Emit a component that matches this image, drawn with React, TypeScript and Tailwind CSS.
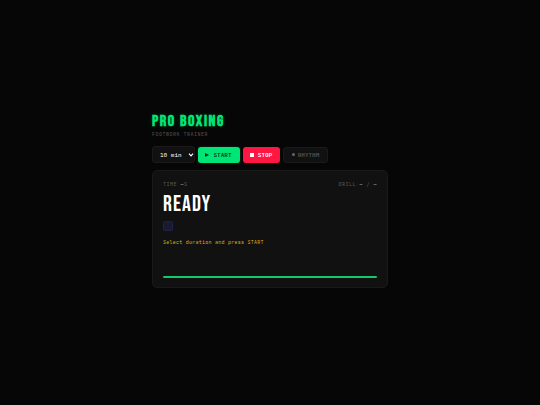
import { useState } from "react";

const durations = [5, 10, 15, 20];

const App = () => {
  const [minutes, setMinutes] = useState(10);

  return (
    <div className="flex min-h-screen items-center justify-center bg-[#060606] pb-[5px] font-['JetBrains_Mono','DejaVu_Sans_Mono',monospace] text-white">
      <main className="w-full max-w-[236px]">
        <header>
          <h1 className="font-['Bebas_Neue','Liberation_Sans',sans-serif] text-[16px] leading-[19px] font-bold tracking-widest text-[#00e676] [text-shadow:0_0_5px_rgba(0,230,118,0.2)]">
            PRO BOXING
          </h1>
          <p className="text-[5px] leading-[7px] tracking-widest text-[#555555]">
            FOOTWORK TRAINER
          </p>
        </header>

        <div className="mt-2 flex items-center gap-[3px] text-[6px] leading-[8px]">
          <div className="relative flex">
            <select
              aria-label="Duration"
              value={minutes}
              onChange={(e) => setMinutes(Number(e.target.value))}
              className="h-[17px] w-[43px] appearance-none rounded-[3px] border border-[#1a1a1a] bg-[#111111] pl-[7px] text-white"
            >
              {durations.map((d) => (
                <option key={d} value={d}>
                  {d} min
                </option>
              ))}
            </select>
            <svg
              viewBox="0 0 6 4"
              className="pointer-events-none absolute top-[7px] right-px h-1 w-1.5"
              fill="none"
              stroke="#ffffff"
              strokeWidth="1.2"
            >
              <path d="M1 0.7 L3 2.8 L5 0.7" />
            </svg>
          </div>
          <button className="flex h-4 w-[42px] items-center justify-center gap-1 rounded-[3px] bg-[#00e676] pr-px font-bold text-[#06351d] shadow-[0_0_3px_rgba(0,230,118,0.2)]">
            <svg viewBox="0 0 4 4" className="size-1" fill="#06351d">
              <path d="M0 0 L4 2 L0 4 Z" />
            </svg>
            START
          </button>
          <button className="flex h-4 w-[37px] items-center justify-center gap-1 rounded-[3px] bg-[#ff1744] pr-px font-bold text-white">
            <span className="size-1 bg-white" />
            STOP
          </button>
          <button className="flex h-4 w-[45px] items-center justify-center gap-[3px] rounded-[3px] border border-[#1a1a1a] bg-[#111111] font-bold text-[#555555]">
            <span className="size-[3px] rounded-full bg-[#666666]" />
            RHYTHM
          </button>
        </div>

        <section className="mt-[7px] rounded-[5px] border border-[#1a1a1a] bg-[#111111] px-[10px] pt-[10px] pb-[9px]">
          <div className="flex justify-between text-[5px] leading-[7px] tracking-widest text-[#5c5c5c]">
            <span>
              TIME <b className="text-[#888888]">—</b>S
            </span>
            <span>
              DRILL <b className="text-[#888888]">—</b> /{" "}
              <b className="text-[#888888]">—</b>
            </span>
          </div>
          <h2 className="mt-[6px] font-['Bebas_Neue','Liberation_Sans',sans-serif] text-[22px] leading-[22px] tracking-wider">
            READY
          </h2>
          <div className="mt-[5px] size-[10px] rounded-[2px] border border-[#20204a] bg-[#1a1a2e]" />
          <p className="mt-2 text-[5px] leading-[7px] tracking-wider text-[#d9ae18]">
            Select duration and press START
          </p>
          <div className="mt-[30px] h-[2px] rounded-full bg-[#14c96b]" />
        </section>
      </main>
    </div>
  );
};

export default App;
